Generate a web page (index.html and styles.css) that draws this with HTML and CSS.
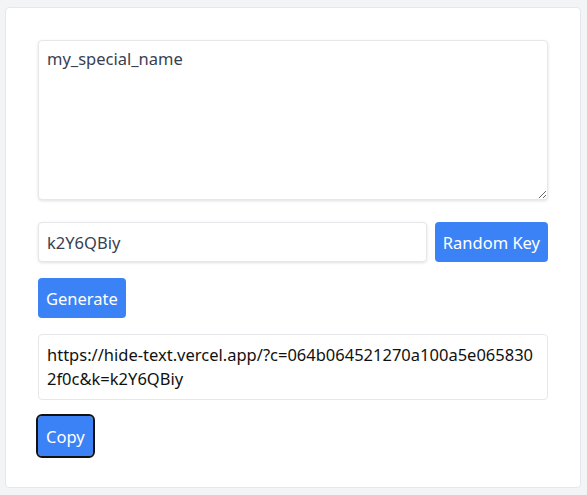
FILE: index.html
```html
<!DOCTYPE html>
<html>
<head>
<meta charset="utf-8">
<link rel="stylesheet" href="styles.css">
</head>
<body>
<div class="card">
  <textarea class="text">my_special_name</textarea>
  <div class="row">
    <input class="key" type="text" value="k2Y6QBiy">
    <button class="btn">Random Key</button>
  </div>
  <div class="row">
    <button class="btn">Generate</button>
  </div>
  <div class="output">https://hide-text.vercel.app/?c=064b064521270a100a5e0658302f0c&amp;k=k2Y6QBiy</div>
  <div class="row">
    <button class="btn focused">Copy</button>
  </div>
</div>
</body>
</html>
```
FILE: styles.css
```css
html, body {
  margin: 0;
  padding: 0;
  background: #f3f4f6;
}
body {
  padding: 7px 6px 0 5px;
  font-family: "Noto Sans", sans-serif;
  font-size: 16.5px;
}
.card {
  background: #fff;
  border: 1px solid #e5e7eb;
  border-radius: 4px;
  padding: 32px 32px 30px 32px;
  height: 481px;
  box-sizing: border-box;
}
.text {
  display: block;
  width: 100%;
  height: 160px;
  box-sizing: border-box;
  border: 1px solid #e5e7eb;
  border-radius: 4px;
  box-shadow: 0 1px 3px rgba(0,0,0,0.12);
  padding: 6px 8px;
  font-family: inherit;
  font-size: 16.5px;
  line-height: 24px;
  color: #374151;
  resize: vertical;
  margin: 0 0 22px 0;
  outline: none;
}
.row {
  display: flex;
  gap: 8px;
  margin-bottom: 16px;
}
.key {
  flex: 1;
  height: 40px;
  box-sizing: border-box;
  border: 1px solid #e5e7eb;
  border-radius: 4px;
  box-shadow: 0 1px 3px rgba(0,0,0,0.12);
  padding: 0 8px;
  font-family: inherit;
  font-size: 16.5px;
  color: #374151;
  outline: none;
}
.btn {
  height: 40px;
  box-sizing: border-box;
  background: #3b82f6;
  color: #fff;
  border: none;
  border-radius: 4px;
  padding: 0 8px;
  font-family: inherit;
  font-size: 16.5px;
  cursor: pointer;
}
.btn.focused {
  outline: 2px solid #111;
  outline-offset: 0;
  border-radius: 4px;
}
.output {
  border: 1px solid #e5e7eb;
  border-radius: 4px;
  padding: 8px 8px;
  line-height: 24px;
  color: #111;
  word-break: break-all;
  margin-bottom: 16px;
}
```
